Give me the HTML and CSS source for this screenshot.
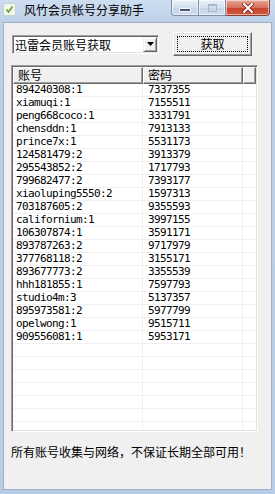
FILE: index.html
```html
<!DOCTYPE html>
<html>
  <head>
    <meta charset="utf-8" />
    <meta name="viewport" content="width=device-width, initial-scale=1" />
    <title>风竹会员帐号分享助手</title>
    <link rel="stylesheet" href="styles.css">
  </head>

  <body>
    <div class="window">
      <!-- Title bar -->
      <div class="titlebar">
        <svg class="app-icon" width="13" height="13" viewBox="0 0 13 13">
          <rect x="0.5" y="0.5" width="12" height="12" rx="2" fill="#f4f6f2" stroke="#c9d2c4" />
          <path d="M3.5 6.5 L5.5 9 L9.5 3.5" fill="none" stroke="#6aa33c" stroke-width="1.8" />
        </svg>
        <span class="title">风竹会员帐号分享助手</span>
        <div class="caption-buttons">
          <div class="cap-btn cap-min"><span class="min-glyph"></span></div>
          <div class="cap-btn cap-max"><span class="max-glyph"></span></div>
          <div class="cap-btn cap-close">
            <svg width="12" height="10" viewBox="0 0 12 10">
              <path d="M2 1 L10 9 M10 1 L2 9" stroke="#6b2318" stroke-width="3.4" stroke-linecap="square" />
              <path d="M2 1 L10 9 M10 1 L2 9" stroke="#ffffff" stroke-width="2" stroke-linecap="square" />
            </svg>
          </div>
        </div>
      </div>

      <!-- Client area -->
      <div class="client">
        <div class="toolbar">
          <div class="combo">
            <span class="combo-text">迅雷会员账号获取</span>
            <span class="combo-arrow">
              <svg width="7" height="4" viewBox="0 0 7 4"><path d="M0 0 H7 L3.5 4 Z" fill="#000" /></svg>
            </span>
          </div>
          <button type="button" class="fetch-btn"><span class="focus-ring">获取</span></button>
        </div>

        <div class="listview">
          <div class="lv-header">
            <div class="lv-head col-user">账号</div>
            <div class="lv-head col-pass">密码</div>
            <div class="lv-head col-rest"></div>
          </div>
          <div class="lv-body">
            <div class="lv-row"><span class="cell user">894240308:1</span><span class="cell pass">7337355</span><span class="cell"></span></div>
            <div class="lv-row"><span class="cell user">xiamuqi:1</span><span class="cell pass">7155511</span><span class="cell"></span></div>
            <div class="lv-row"><span class="cell user">peng668coco:1</span><span class="cell pass">3331791</span><span class="cell"></span></div>
            <div class="lv-row"><span class="cell user">chensddn:1</span><span class="cell pass">7913133</span><span class="cell"></span></div>
            <div class="lv-row"><span class="cell user">prince7x:1</span><span class="cell pass">5531173</span><span class="cell"></span></div>
            <div class="lv-row"><span class="cell user">124581479:2</span><span class="cell pass">3913379</span><span class="cell"></span></div>
            <div class="lv-row"><span class="cell user">295543852:2</span><span class="cell pass">1717793</span><span class="cell"></span></div>
            <div class="lv-row"><span class="cell user">799682477:2</span><span class="cell pass">7393177</span><span class="cell"></span></div>
            <div class="lv-row"><span class="cell user">xiaoluping5550:2</span><span class="cell pass">1597313</span><span class="cell"></span></div>
            <div class="lv-row"><span class="cell user">703187605:2</span><span class="cell pass">9355593</span><span class="cell"></span></div>
            <div class="lv-row"><span class="cell user">californium:1</span><span class="cell pass">3997155</span><span class="cell"></span></div>
            <div class="lv-row"><span class="cell user">106307874:1</span><span class="cell pass">3591171</span><span class="cell"></span></div>
            <div class="lv-row"><span class="cell user">893787263:2</span><span class="cell pass">9717979</span><span class="cell"></span></div>
            <div class="lv-row"><span class="cell user">377768118:2</span><span class="cell pass">3155171</span><span class="cell"></span></div>
            <div class="lv-row"><span class="cell user">893677773:2</span><span class="cell pass">3355539</span><span class="cell"></span></div>
            <div class="lv-row"><span class="cell user">hhh181855:1</span><span class="cell pass">7597793</span><span class="cell"></span></div>
            <div class="lv-row"><span class="cell user">studio4m:3</span><span class="cell pass">5137357</span><span class="cell"></span></div>
            <div class="lv-row"><span class="cell user">895973581:2</span><span class="cell pass">5977799</span><span class="cell"></span></div>
            <div class="lv-row"><span class="cell user">opelwong:1</span><span class="cell pass">9515711</span><span class="cell"></span></div>
            <div class="lv-row"><span class="cell user">909556081:1</span><span class="cell pass">5953171</span><span class="cell"></span></div>
            <!-- empty rows so the grid lines run to the bottom -->
            <div class="lv-row"><span class="cell"></span><span class="cell"></span><span class="cell"></span></div>
            <div class="lv-row"><span class="cell"></span><span class="cell"></span><span class="cell"></span></div>
            <div class="lv-row"><span class="cell"></span><span class="cell"></span><span class="cell"></span></div>
            <div class="lv-row"><span class="cell"></span><span class="cell"></span><span class="cell"></span></div>
            <div class="lv-row"><span class="cell"></span><span class="cell"></span><span class="cell"></span></div>
            <div class="lv-row"><span class="cell"></span><span class="cell"></span><span class="cell"></span></div>
            <div class="lv-row"><span class="cell"></span><span class="cell"></span><span class="cell"></span></div>
          </div>
        </div>

        <p class="note">所有账号收集与网络，不保证长期全部可用！</p>
      </div>
    </div>
  </body>
</html>
```

FILE: styles.css
```css
html,
body {
  margin: 0;
  padding: 0;
}

body {
  width: 275px;
  height: 494px;
  overflow: hidden;
  font-family: "Noto Sans CJK SC", "Liberation Sans", sans-serif;
  font-size: 12px;
  color: #000;
}

.window {
  width: 275px;
  height: 494px;
  box-sizing: border-box;
  padding: 0 3px 4px 3px;
  display: flex;
  flex-direction: column;
  background: linear-gradient(#cddef2, #bdd0e8 22px, #b9cce5);
}

/* title bar */
.titlebar {
  height: 22px;
  flex: none;
  display: flex;
  align-items: flex-start;
}

.app-icon {
  margin-top: 3px;
  flex: none;
}

.title {
  margin-left: 8px;
  line-height: 20px;
  font-size: 12px;
  color: #000;
}

.caption-buttons {
  margin-left: auto;
  margin-right: 2px;
  display: flex;
  height: 16px;
}

.cap-btn {
  box-sizing: border-box;
  height: 16px;
  display: flex;
  align-items: center;
  justify-content: center;
  border: 1px solid #7d8ea6;
  border-top: none;
  box-shadow: inset 0 0 0 1px rgba(255, 255, 255, 0.55);
}

.cap-min {
  width: 28px;
  border-bottom-left-radius: 4px;
  background: linear-gradient(#e9f0f9, #d4e0ee 50%, #c4d4e8 51%, #cedcee);
}

.cap-max {
  width: 27px;
  border-left: none;
  background: linear-gradient(#e9f0f9, #d4e0ee 50%, #c4d4e8 51%, #cedcee);
}

.cap-close {
  width: 44px;
  border-left: none;
  border-color: #8f3b2f;
  border-bottom-right-radius: 4px;
  background: linear-gradient(#e7a493, #d7705c 50%, #c7432c 51%, #d0563d);
}

.min-glyph {
  width: 10px;
  height: 2px;
  margin-top: 5px;
  background: #45556b;
  border: 1px solid #f4f7fb;
}

.max-glyph {
  width: 7px;
  height: 5px;
  border: 1px solid #9eabbd;
  border-top-width: 2px;
  opacity: 0.8;
}

/* client area */
.client {
  flex: 1;
  background: #f0f0f0;
  border: 1px solid #9fb0c6;
  padding: 9px 0 0 7px;
  display: flex;
  flex-direction: column;
}

.toolbar {
  display: flex;
  align-items: center;
}

.combo {
  box-sizing: border-box;
  width: 147px;
  height: 19px;
  margin-left: 1px;
  display: flex;
  align-items: center;
  background: #fff;
  border: 1px solid;
  border-color: #a0a0a0 #ffffff #ffffff #a0a0a0;
  box-shadow: inset 1px 1px 0 #696969, inset -1px -1px 0 #e3e3e3;
  padding: 1px 1px 1px 2px;
}

.combo-text {
  flex: 1;
  line-height: 15px;
}

.combo-arrow {
  box-sizing: border-box;
  width: 14px;
  height: 15px;
  display: flex;
  align-items: center;
  justify-content: center;
  background: #f0f0f0;
  border: 1px solid;
  border-color: #f0f0f0 #696969 #696969 #f0f0f0;
  box-shadow: inset 1px 1px 0 #fff, inset -1px -1px 0 #a0a0a0;
}

.fetch-btn {
  box-sizing: border-box;
  width: 79px;
  height: 24px;
  margin-left: 14px;
  padding: 3px;
  font-family: "Noto Sans CJK SC", sans-serif;
  font-size: 12px;
  color: #000;
  background: #f0f0f0;
  border: 1px solid;
  border-color: #ffffff #696969 #696969 #ffffff;
  box-shadow: inset -1px -1px 0 #a0a0a0, inset 1px 1px 0 #e3e3e3;
  display: flex;
}

.focus-ring {
  flex: 1;
  border: 1px dotted #000;
  line-height: 14px;
  text-align: center;
}

/* list view */
.listview {
  box-sizing: border-box;
  width: 247px;
  height: 367px;
  margin-top: 9px;
  background: #fff;
  border: 1px solid;
  border-color: #a0a0a0 #ffffff #ffffff #a0a0a0;
  box-shadow: inset 1px 1px 0 #696969, inset -1px -1px 0 #e3e3e3;
  padding: 1px;
  display: flex;
  flex-direction: column;
  overflow: hidden;
}

.lv-header {
  display: grid;
  grid-template-columns: 130px 100px 1fr;
  height: 17px;
  flex: none;
}

.lv-head {
  box-sizing: border-box;
  background: #f0f0f0;
  border: 1px solid;
  border-color: #ffffff #696969 #696969 #ffffff;
  box-shadow: inset -1px -1px 0 #a0a0a0;
  padding-left: 4px;
  line-height: 14px;
}

.lv-body {
  flex: 1;
  overflow: hidden;
}

.lv-row {
  display: grid;
  grid-template-columns: 130px 100px 1fr;
  height: 13px;
  box-sizing: border-box;
  border-bottom: 1px solid #f0f0f0;
}

.cell {
  border-right: 1px solid #f0f0f0;
  font-family: "DejaVu Sans Mono", monospace;
  font-size: 11px;
  letter-spacing: -0.62px;
  line-height: 12px;
  white-space: nowrap;
  overflow: hidden;
}

.cell:last-child {
  border-right: none;
}

.user {
  padding-left: 3px;
}

.pass {
  padding-left: 5px;
}

.note {
  margin: 12px 0 0 0;
  line-height: 16px;
  font-size: 12px;
}
```
